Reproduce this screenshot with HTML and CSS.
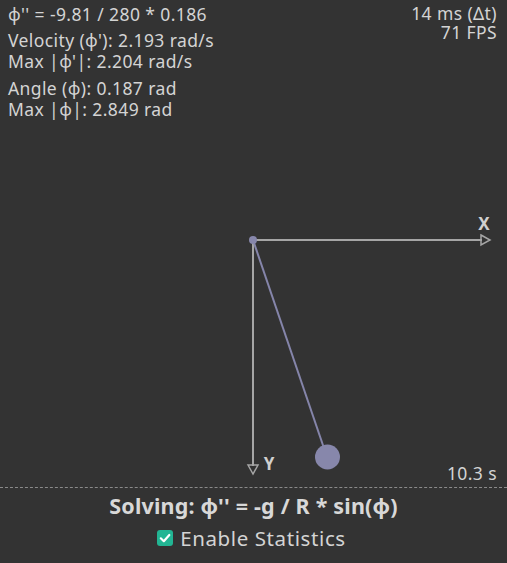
FILE: index.html
```html
<!DOCTYPE html>
<html>
<head>
<meta charset="utf-8">
<link rel="stylesheet" href="styles.css">
</head>
<body>
<div class="stage">
  <svg class="diagram" width="507" height="487" viewBox="0 0 507 487">
    <line x1="253" y1="240" x2="482" y2="240" class="axis"/>
    <polygon points="481,235 490,240 481,245" class="arrow"/>
    <text x="484" y="230" class="axlabel" text-anchor="middle">X</text>
    <line x1="253" y1="240" x2="253" y2="466" class="axis"/>
    <polygon points="248,465 253,474 258,465" class="arrow"/>
    <text x="269" y="470" class="axlabel" text-anchor="middle">Y</text>
    <line x1="253" y1="240" x2="327" y2="457" class="rod"/>
    <circle cx="253" cy="240" r="4" class="bob"/>
    <circle cx="327.5" cy="457" r="12.5" class="bob"/>
  </svg>
  <div class="hud">
    <div class="top">
      <div class="stats">
        <div class="line">φ'' = -9.81 / 280 * 0.186</div>
        <div class="group">
          <div class="line">Velocity (φ'): 2.193 rad/s</div>
          <div class="line">Max |φ'|: 2.204 rad/s</div>
        </div>
        <div class="group">
          <div class="line">Angle (φ): 0.187 rad</div>
          <div class="line">Max |φ|: 2.849 rad</div>
        </div>
      </div>
      <div class="timing">
        <div class="tline">14 ms (Δt)</div>
        <div class="tline">71 FPS</div>
      </div>
    </div>
    <div class="bottom">10.3 s</div>
  </div>
</div>
<div class="footer">
  <div class="title">Solving: φ'' = -g / R * sin(φ)</div>
  <label class="toggle">
    <span class="box"><svg width="16" height="16" viewBox="0 0 16 16"><path d="M3.8 8.3 L6.8 11.2 L12.3 5" fill="none" stroke="#fff" stroke-width="2.2" stroke-linecap="round" stroke-linejoin="round"/></svg></span>
    <span>Enable Statistics</span>
  </label>
</div>
</body>
</html>
```
FILE: styles.css
```css
html, body {
  margin: 0;
  padding: 0;
  background: #333333;
  color: #d4d4d4;
  font-family: "Noto Sans", "Open Sans", sans-serif;
}
.stage {
  position: relative;
  width: 507px;
  height: 487px;
}
.diagram {
  position: absolute;
  left: 0;
  top: 0;
}
.axis {
  stroke: #a6a6a6;
  stroke-width: 2;
}
.arrow {
  fill: none;
  stroke: #a6a6a6;
  stroke-width: 1.5;
  stroke-linejoin: miter;
}
.axlabel {
  fill: #d0d0d0;
  font-family: "Noto Sans", sans-serif;
  font-weight: 700;
  font-size: 17px;
}
.rod {
  stroke: #8585aa;
  stroke-width: 2;
}
.bob {
  fill: #8787ab;
}
.hud {
  position: relative;
  height: 487px;
  box-sizing: border-box;
  padding: 4px 10px 4px 8px;
  display: flex;
  flex-direction: column;
  justify-content: space-between;
  letter-spacing: 0.4px;
}
.top {
  display: flex;
  justify-content: space-between;
}
.stats {
  font-size: 17.5px;
  line-height: 21px;
}
.group {
  margin-top: 5px;
}
.group + .group {
  margin-top: 6px;
}
.line {
  height: 21px;
}
.timing {
  text-align: right;
  font-size: 17.5px;
  line-height: 19px;
}
.bottom {
  text-align: right;
  font-size: 17.5px;
  line-height: 20px;
}
.footer {
  border-top: 1px dashed #8a8a8a;
  text-align: center;
  padding-top: 3px;
}
.title {
  font-size: 21.5px;
  font-weight: 700;
  line-height: 29px;
  color: #d8d8d8;
  letter-spacing: 0.2px;
}
.toggle {
  margin-top: 5px;
  margin-right: 4px;
  display: inline-flex;
  align-items: center;
  gap: 7px;
  font-size: 20.5px;
  line-height: 26px;
  letter-spacing: 0.6px;
}
.box {
  width: 16px;
  height: 16px;
  border-radius: 3px;
  background: #22b593;
  display: inline-flex;
}
```
